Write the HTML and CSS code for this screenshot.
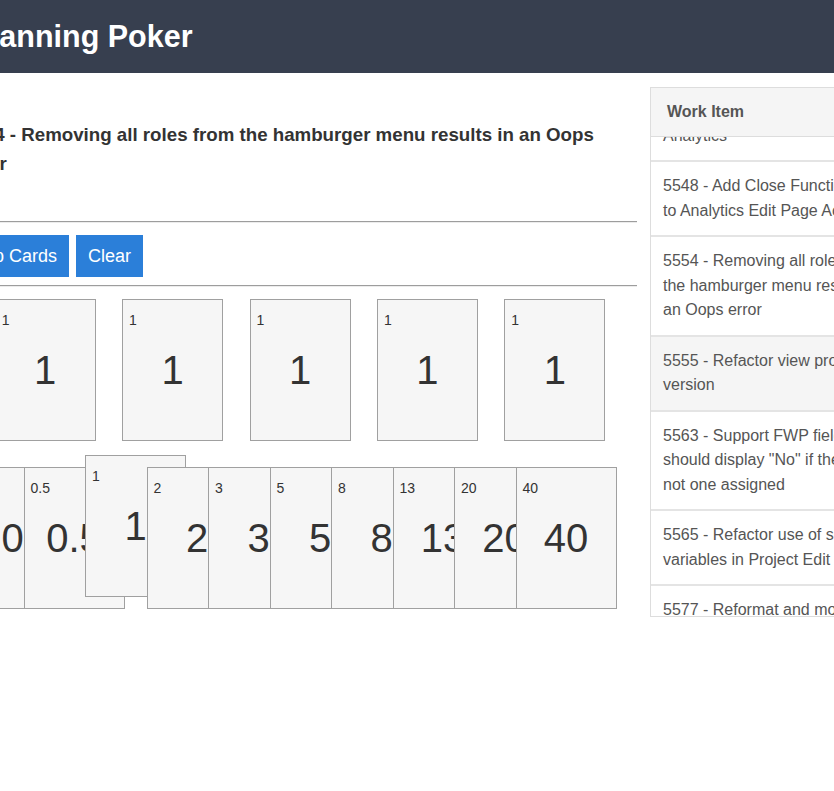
FILE: index.html
```html
<!DOCTYPE html>
<html lang="en">
<head>
<meta charset="utf-8">
<title>Planning Poker</title>
<link rel="stylesheet" href="styles.css">
</head>
<body>
<header class="topbar">
  <div class="topbar-inner">
    <h1 class="brand">Planning Poker</h1>
  </div>
</header>
<div class="page">
  <main class="board">
    <h3 class="story-title">5554 - Removing all roles from the hamburger menu results in an Oops error</h3>
    <hr class="rule">
    <div class="actions">
      <button class="btn">Flip Cards</button>
      <button class="btn">Clear</button>
    </div>
    <hr class="rule rule-tight">
    <div class="played">
      <div class="card"><span class="card-corner">1</span><span class="card-value">1</span></div>
      <div class="card"><span class="card-corner">1</span><span class="card-value">1</span></div>
      <div class="card"><span class="card-corner">1</span><span class="card-value">1</span></div>
      <div class="card"><span class="card-corner">1</span><span class="card-value">1</span></div>
      <div class="card"><span class="card-corner">1</span><span class="card-value">1</span></div>
    </div>
    <div class="hand">
      <div class="card"><span class="card-corner">0</span><span class="card-value">0</span></div>
      <div class="card"><span class="card-corner">0.5</span><span class="card-value">0.5</span></div>
      <div class="card is-selected"><span class="card-corner">1</span><span class="card-value">1</span></div>
      <div class="card"><span class="card-corner">2</span><span class="card-value">2</span></div>
      <div class="card"><span class="card-corner">3</span><span class="card-value">3</span></div>
      <div class="card"><span class="card-corner">5</span><span class="card-value">5</span></div>
      <div class="card"><span class="card-corner">8</span><span class="card-value">8</span></div>
      <div class="card"><span class="card-corner">13</span><span class="card-value">13</span></div>
      <div class="card"><span class="card-corner">20</span><span class="card-value">20</span></div>
      <div class="card"><span class="card-corner">40</span><span class="card-value">40</span></div>
    </div>
  </main>
  <aside class="queue">
    <div class="queue-head">Work Item</div>
    <div class="queue-body">
      <div class="queue-list">
        <div class="queue-item">5546 - Fix Date Filter in Analytics</div>
        <div class="queue-item">5548 - Add Close Functionality to Analytics Edit Page Actions</div>
        <div class="queue-item">5554 - Removing all roles from the hamburger menu results in an Oops error</div>
        <div class="queue-item is-hover">5555 - Refactor view project version</div>
        <div class="queue-item">5563 - Support FWP field should display "No" if there is not one assigned</div>
        <div class="queue-item">5565 - Refactor use of session variables in Project Edit</div>
        <div class="queue-item">5577 - Reformat and move project notes</div>
        <div class="queue-item">5580 - Update export options</div>
      </div>
    </div>
  </aside>
</div>
</body>
</html>
```

FILE: styles.css
```css
* {
  box-sizing: border-box;
}

html, body {
  margin: 0;
  padding: 0;
  background: #ffffff;
}

body {
  font-family: "Liberation Sans", Arial, sans-serif;
  color: #333333;
  overflow: hidden;
  width: 834px;
  height: 791px;
}

.topbar {
  background: #373f4f;
  height: 73px;
  overflow: hidden;
}

.topbar-inner {
  margin-left: -36px;
  padding-left: 6.5px;
}

.brand {
  margin: 0;
  font-size: 30.5px;
  font-weight: bold;
  line-height: 73px;
  color: #ffffff;
  white-space: nowrap;
}

.page {
  display: flex;
  align-items: flex-start;
  margin-left: -37px;
  width: 1100px;
}

.board {
  width: 674px;
  flex: none;
  padding-top: 47px;
}

.story-title {
  margin: 0;
  font-size: 18.72px;
  line-height: 29px;
  font-weight: bold;
  color: #333333;
}

.rule {
  margin: 43px 0 0;
  height: 0;
  border: 0;
  border-top: 1px solid #9d9d9d;
  border-bottom: 1px solid #ececec;
}

.rule-tight {
  margin-top: 8px;
}

.actions {
  display: flex;
  gap: 7px;
  margin-top: 12px;
}

.btn {
  height: 42px;
  padding: 0 12px;
  border: 0;
  border-radius: 0;
  background: #2b7fd9;
  color: #ffffff;
  font-family: "Liberation Sans", Arial, sans-serif;
  font-size: 18px;
  line-height: 42px;
}

.played {
  display: flex;
  justify-content: center;
  gap: 26.4px;
  margin-top: 12px;
}

.hand {
  display: flex;
  align-items: flex-start;
  margin-top: 26px;
  margin-left: -1px;
}

.card {
  flex: none;
  width: 101px;
  height: 142px;
  border: 1px solid #a0a0a0;
  background: #f6f6f6;
  display: grid;
  grid-template: 1fr / 1fr;
  color: #333333;
}

.hand .card + .card {
  margin-left: -39.5px;
}

.hand .card.is-selected {
  margin-top: -12px;
}

.card-corner {
  grid-area: 1 / 1;
  align-self: start;
  justify-self: start;
  padding: 12px 6px 0;
  font-size: 14px;
  line-height: 16px;
}

.card-value {
  grid-area: 1 / 1;
  align-self: center;
  justify-self: center;
  font-size: 40px;
  line-height: 46px;
  white-space: nowrap;
}

.queue {
  flex: none;
  width: 300px;
  height: 530px;
  margin-left: 13px;
  margin-top: 14px;
  border: 1px solid #dddddd;
  display: flex;
  flex-direction: column;
}

.queue-head {
  flex: none;
  height: 49px;
  padding-left: 16px;
  background: #f5f5f5;
  border-bottom: 1px solid #dddddd;
  font-size: 16px;
  font-weight: bold;
  color: #555555;
  line-height: 48px;
}

.queue-body {
  flex: 1;
  overflow: hidden;
}

.queue-list {
  margin-top: -50px;
}

.queue-item {
  width: 253px;
  padding: 12px;
  font-size: 16px;
  line-height: 24.5px;
  color: #555555;
  border-bottom: 2px solid #e4e4e4;
  background: #ffffff;
}

.queue-item.is-hover {
  background: #f5f5f5;
}
```
